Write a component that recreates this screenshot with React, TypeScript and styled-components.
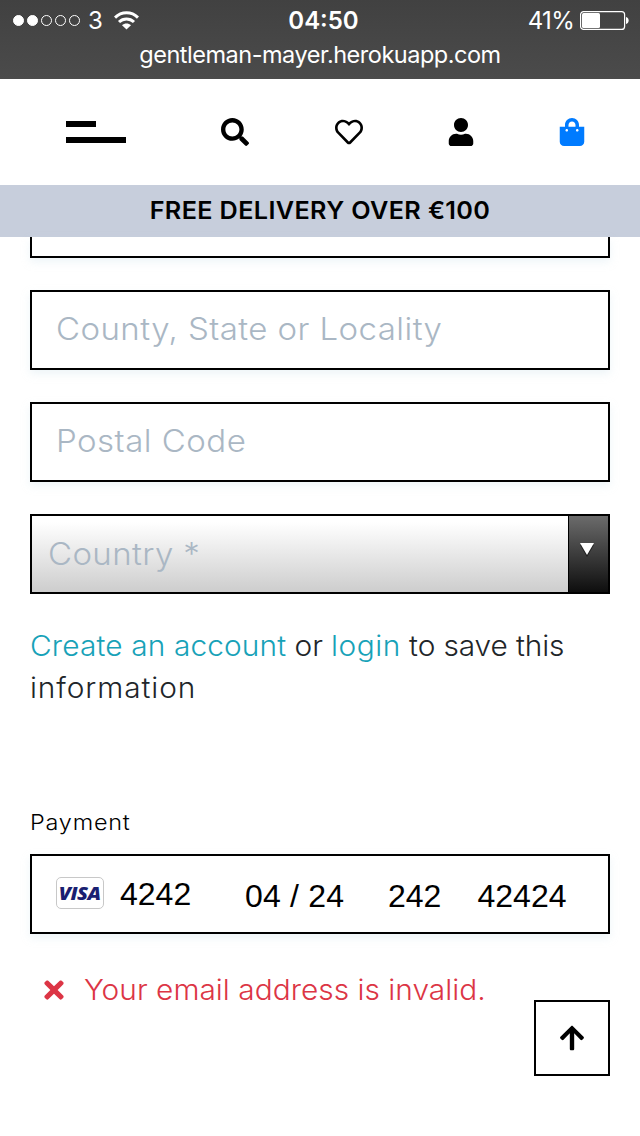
import React from "react";
import styled, { createGlobalStyle } from "styled-components";
import { FaSearch, FaRegHeart, FaUser, FaShoppingBag, FaTimes, FaArrowUp } from "react-icons/fa";

const GlobalStyle = createGlobalStyle`
  * { box-sizing: border-box; }
  body { margin: 0; background: #fff; font-family: Inter, "Liberation Sans", sans-serif; font-weight: 300; overflow: hidden; }
`;

const Page = styled.div`
  position: relative;
  width: 640px;
  height: 1136px;
  overflow: hidden;
  background: #fff;
`;

const BrowserBar = styled.header`
  height: 79px;
  background: linear-gradient(#414141, #4b4b4b);
  color: #fff;
  font-weight: 400;
`;

const StatusRow = styled.div`
  height: 41px;
  padding: 0 11px 0 13px;
  display: grid;
  grid-template-columns: 1fr auto 1fr;
  align-items: center;
`;

const StatusGroup = styled.div<{ $end?: boolean }>`
  display: flex;
  align-items: center;
  justify-content: ${(p) => (p.$end ? "flex-end" : "flex-start")};
`;

const Dots = styled.div`
  display: flex;
  gap: 3px;
`;

const Dot = styled.span<{ $on?: boolean }>`
  width: 11px;
  height: 11px;
  border-radius: 50%;
  border: 1px solid #fff;
  background: ${(p) => (p.$on ? "#fff" : "transparent")};
`;

const Carrier = styled.span`
  font-size: 24px;
  margin: 0 11px 0 8px;
`;

const Clock = styled.span`
  font-size: 24px;
  font-weight: 600;
  padding-left: 5px;
`;

const Percent = styled.span`
  font-size: 24px;
  letter-spacing: -0.7px;
  margin-right: 6px;
`;

const Address = styled.div`
  text-align: center;
  font-size: 23.5px;
  line-height: 28px;
  letter-spacing: -0.48px;
`;

const NavBar = styled.nav`
  height: 106px;
  padding: 0 56px 0 66px;
  display: flex;
  align-items: center;
  justify-content: space-between;
  color: #000;
`;

const IconBox = styled.span<{ $w: number }>`
  width: ${(p) => p.$w}px;
  height: 28px;
  flex: none;
  display: flex;
  justify-content: center;
  svg { flex: none; width: 28px; height: 28px; }
`;

const Burger = styled.div`
  width: 60px;
  margin-right: 9px;
  display: flex;
  flex-direction: column;
  gap: 10px;
`;

const BurgerLine = styled.span<{ $w: number }>`
  height: 6px;
  width: ${(p) => p.$w}px;
  background: #000;
`;

const Banner = styled.div`
  height: 52px;
  line-height: 52px;
  background: #c7cedc;
  color: #000;
  text-align: center;
  font-size: 24px;
  font-weight: 600;
  letter-spacing: 0.35px;
`;

const BannerText = styled.div`
  transform: scaleX(1.05);
`;

const Form = styled.main`
  padding: 0 30px;
`;

const Field = styled.div<{ $cut?: boolean }>`
  height: ${(p) => (p.$cut ? 21 : 80)}px;
  margin-bottom: 32px;
  padding: 0 24px;
  display: flex;
  align-items: center;
  border: 2px solid #000;
  border-top-width: ${(p) => (p.$cut ? 0 : 2)}px;
  background: #fff;
  box-shadow: 0 4px 8px rgba(207, 225, 235, 0.35);
`;

const Placeholder = styled.span<{ $ls: number; $lift: number }>`
  color: #aab7c4;
  font-size: 31px;
  letter-spacing: ${(p) => p.$ls}px;
  padding-bottom: ${(p) => p.$lift}px;
  white-space: pre;
  transform: scaleX(1.065);
  transform-origin: left;
`;

const Select = styled.div`
  height: 80px;
  display: flex;
  border: 2px solid #000;
  background: linear-gradient(#fff 8%, #cdcdcd);
`;

const SelectValue = styled.div`
  flex: 1;
  padding-left: 16px;
  display: flex;
  align-items: center;
`;

const SelectArrow = styled.div`
  width: 40px;
  padding: 27px 0 0 11px;
  border-left: 1px solid #000;
  background: linear-gradient(#6b6b6b, #0e0e0e);
  svg { display: block; }
`;

const Note = styled.p`
  margin: 31px 0 0;
  color: #212529;
  font-size: 28px;
  line-height: 42px;
  letter-spacing: -0.1px;
  white-space: nowrap;
  transform: scaleX(1.065);
  transform-origin: left;
`;

const Link = styled.a<{ $ls: number }>`
  color: #17a2b8;
  letter-spacing: ${(p) => p.$ls}px;
`;

const NoteEnd = styled.span`
  letter-spacing: 0.85px;
`;

const Legend = styled.div`
  margin: 97px 0 16px;
  color: #000;
  font-size: 22px;
  line-height: 32px;
  height: 32px;
  font-weight: 350;
  letter-spacing: 0.75px;
  transform: scaleX(1.065);
  transform-origin: left;
`;

const Card = styled(Field)`
  margin: 0;
  font-family: "Liberation Sans", sans-serif;
  font-size: 32px;
  font-weight: 400;
  color: #000;
`;

const VisaBadge = styled.span`
  width: 48px;
  height: 32px;
  border: 1px solid #c8c8c8;
  border-radius: 5px;
  margin: -2px 16px 0 0;
  display: flex;
  align-items: center;
  justify-content: center;
  font: italic 800 17px/1 "Open Sans", sans-serif;
  letter-spacing: -0.5px;
  color: #1a1f71;
`;

const VisaWord = styled.span`
  transform: scaleX(1.18);
`;

const CardPart = styled.span<{ $w: number; $ls?: number; $up?: boolean }>`
  width: ${(p) => p.$w}px;
  padding-top: ${(p) => (p.$up ? 0 : 4)}px;
  letter-spacing: ${(p) => p.$ls ?? 0}px;
  flex: none;
  white-space: nowrap;
`;

const ErrorRow = styled.div`
  margin-top: 35px;
  padding-left: 14px;
  height: 42px;
  display: flex;
  align-items: center;
  gap: 21px;
  color: #dc3545;
  font-size: 28px;
`;

const ErrorText = styled.span`
  letter-spacing: 0.03px;
  transform: scaleX(1.065);
  transform-origin: left;
`;

const ToTop = styled.button`
  position: absolute;
  right: 30px;
  top: 1000px;
  width: 76px;
  height: 76px;
  padding: 0;
  border: 2px solid #000;
  background: #fff;
  color: #000;
  display: flex;
  align-items: center;
  justify-content: center;
`;

const Wifi = () => (
  <svg width="25" height="19" viewBox="0 0 25 19" fill="none" stroke="#fff" strokeWidth="3">
    <path d="M1 6.600C7.500.1 17.500.1 24 6.600" />
    <path d="M5 11C9.300 6.900 15.700 6.900 20 11" />
    <path d="M12.500 18.600 8 14.300c2.500-2.300 6.500-2.300 9 0z" fill="#fff" stroke="none" />
  </svg>
);

const Battery = () => (
  <svg width="49" height="19" viewBox="0 0 49 19">
    <rect x=".6" y=".6" width="44" height="17.800" rx="3" fill="none" stroke="#fff" strokeWidth="1.200" />
    <rect x="2" y="2" width="18" height="15" rx="1.500" fill="#fff" />
    <path d="M46 6c3.500.5 3.500 6.500 0 7z" fill="#fff" />
  </svg>
);

export default function App() {
  return (
    <Page>
      <GlobalStyle />
      <BrowserBar>
        <StatusRow>
          <StatusGroup>
            <Dots><Dot $on /><Dot $on /><Dot /><Dot /><Dot /></Dots>
            <Carrier>3</Carrier>
            <Wifi />
          </StatusGroup>
          <Clock>04:50</Clock>
          <StatusGroup $end>
            <Percent>41%</Percent>
            <Battery />
          </StatusGroup>
        </StatusRow>
        <Address>gentleman-mayer.herokuapp.com</Address>
      </BrowserBar>
      <NavBar>
        <Burger><BurgerLine $w={30} /><BurgerLine $w={60} /></Burger>
        <IconBox $w={28}><FaSearch /></IconBox>
        <IconBox $w={28}><FaRegHeart /></IconBox>
        <IconBox $w={24.5}><FaUser /></IconBox>
        <IconBox $w={24.5}><FaShoppingBag color="#007bff" /></IconBox>
      </NavBar>
      <Banner><BannerText>FREE DELIVERY OVER €100</BannerText></Banner>
      <Form>
        <Field $cut />
        <Field><Placeholder $ls={0.4} $lift={4}>County, State or Locality</Placeholder></Field>
        <Field><Placeholder $ls={0.45} $lift={4}>Postal Code</Placeholder></Field>
        <Select>
          <SelectValue><Placeholder $ls={0.35} $lift={2}>Country *</Placeholder></SelectValue>
          <SelectArrow>
            <svg width="14" height="14" viewBox="0 0 14 14">
              <path d="M0 2h14L7 14z" fill="#000" opacity=".5" />
              <path d="M0 0h14L7 12z" fill="#fff" />
            </svg>
          </SelectArrow>
        </Select>
        <Note>
          <Link $ls={0.13}>Create an account</Link> or <Link $ls={0.5}>login</Link> to save this<br />
          <NoteEnd>information</NoteEnd>
        </Note>
        <Legend>Payment</Legend>
        <Card>
          <VisaBadge><VisaWord>VISA</VisaWord></VisaBadge>
          <CardPart $w={125} $up>4242</CardPart>
          <CardPart $w={143} $ls={0.2}>04 / 24</CardPart>
          <CardPart $w={89.5}>242</CardPart>
          <CardPart $w={90}>42424</CardPart>
        </Card>
        <ErrorRow>
          <IconBox $w={19.25}><FaTimes /></IconBox>
          <ErrorText>Your email address is invalid.</ErrorText>
        </ErrorRow>
      </Form>
      <ToTop aria-label="Back to top"><FaArrowUp size={28} /></ToTop>
    </Page>
  );
}
